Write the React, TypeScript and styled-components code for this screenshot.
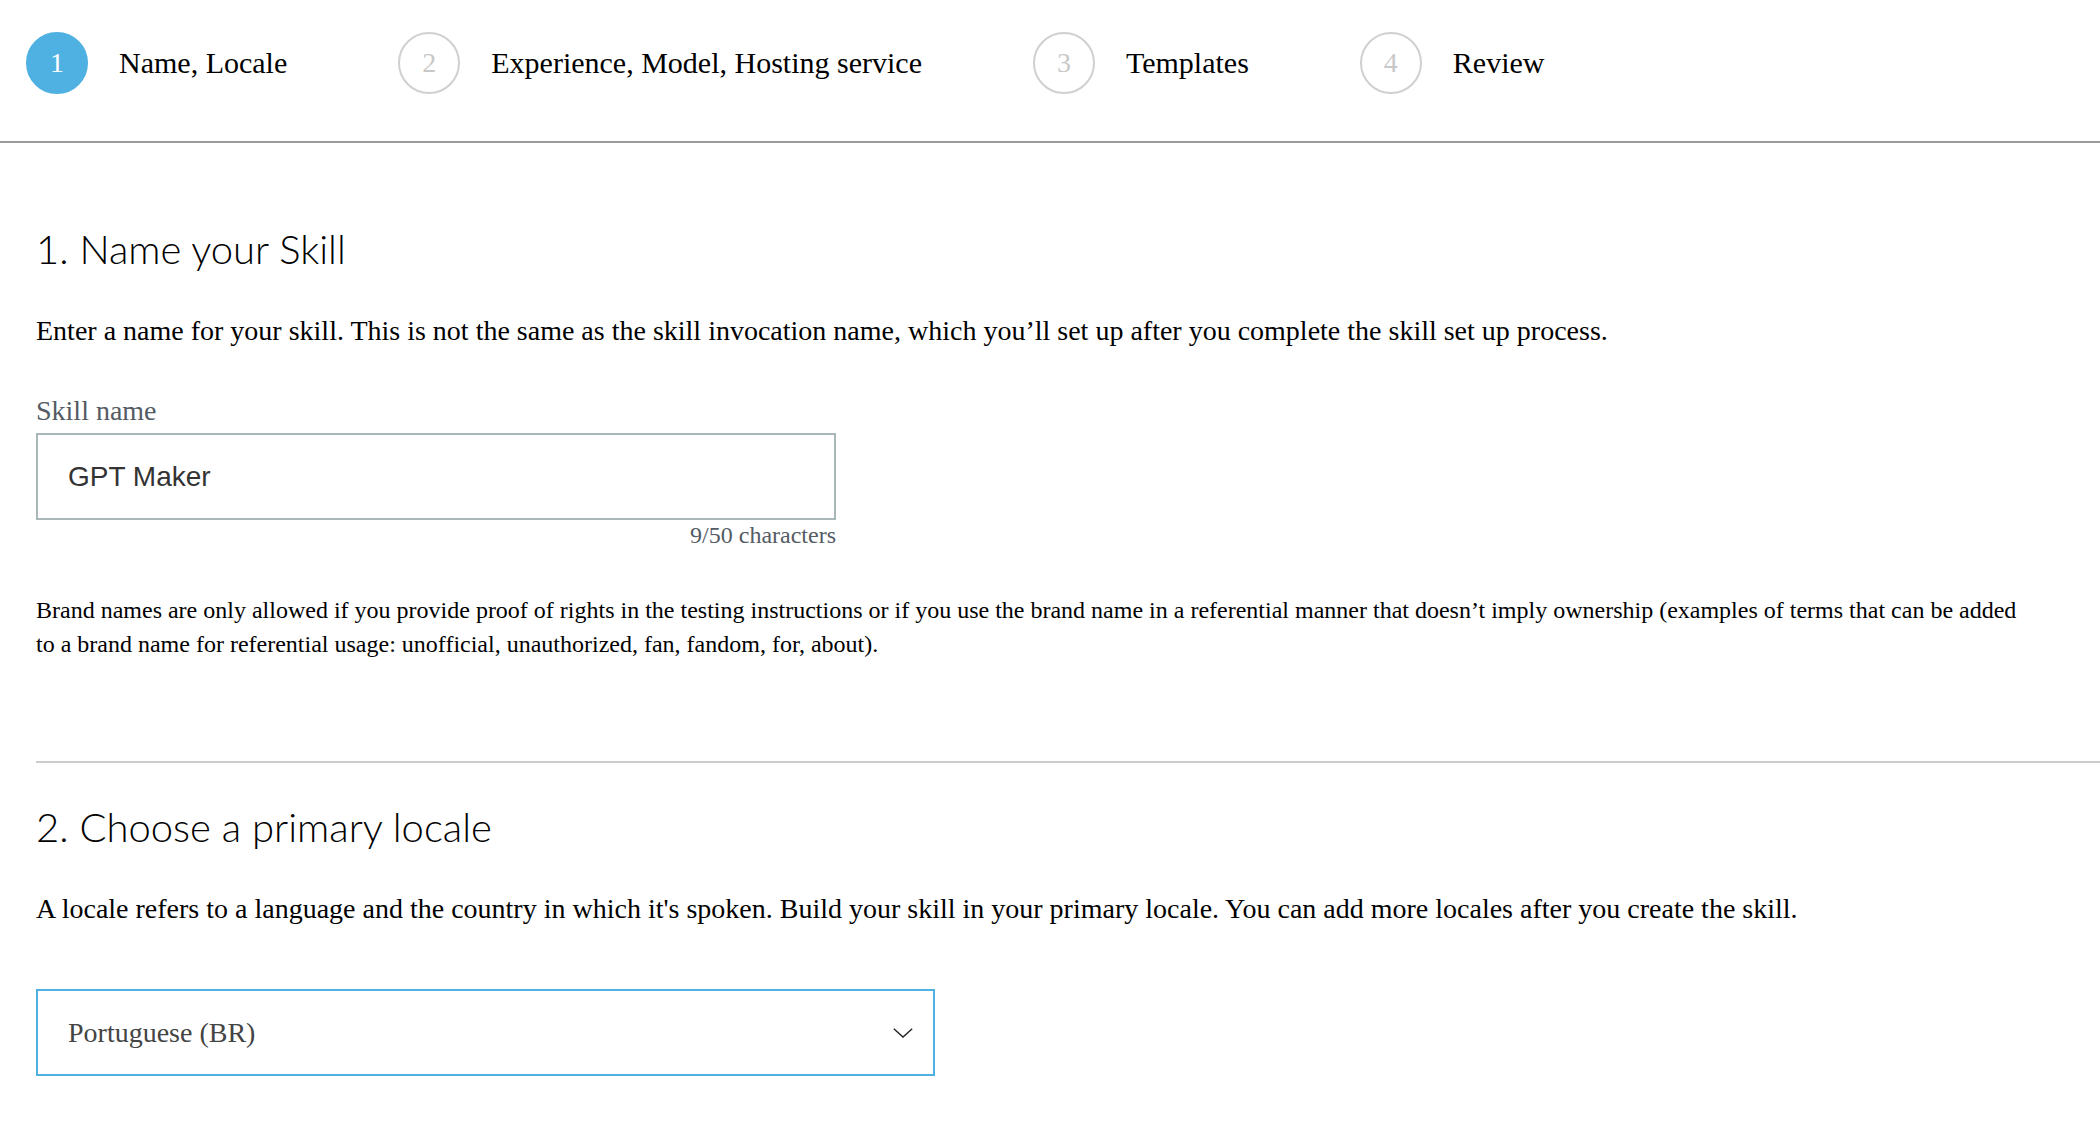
import styled, { createGlobalStyle } from "styled-components";

const GlobalStyle = createGlobalStyle`
  body {
    margin: 0;
    background: #ffffff;
    font-family: "Liberation Serif", "Times New Roman", serif;
    color: #000000;
  }
`;

const Header = styled.header`
  display: flex;
  align-items: center;
  gap: 111px;
  padding: 32px 0 47px 26px;
  border-bottom: 2px solid #9b9b9b;
`;

const Step = styled.div`
  display: flex;
  align-items: center;
  gap: 31px;
`;

const StepCircle = styled.div<{ $active?: boolean }>`
  box-sizing: border-box;
  width: 62px;
  height: 62px;
  border-radius: 50%;
  display: flex;
  align-items: center;
  justify-content: center;
  font-size: 28px;
  background: ${(p) => (p.$active ? "#4fb0e2" : "#ffffff")};
  border: 2px solid ${(p) => (p.$active ? "#4fb0e2" : "#d0d0d0")};
  color: ${(p) => (p.$active ? "#ffffff" : "#c8c8c8")};
`;

const StepLabel = styled.span`
  font-size: 30px;
  color: #000000;
`;

const Main = styled.main`
  padding: 0 0 60px 36px;
`;

const Section = styled.section<{ $top: number }>`
  display: flex;
  flex-direction: column;
  align-items: flex-start;
  padding: ${(p) => p.$top}px 72px 0 0;
`;

const Heading = styled.h2`
  margin: 0 0 40px;
  font-family: Lato, "Open Sans", sans-serif;
  font-weight: 300;
  font-size: 40px;
  line-height: 48px;
  color: #000000;
`;

const Lead = styled.p`
  margin: 0;
  font-size: 28px;
  line-height: 36px;
`;

const Field = styled.div`
  width: 800px;
  margin-top: 45px;
`;

const Label = styled.div`
  margin-bottom: 5px;
  font-size: 28px;
  line-height: 34px;
  color: #545b64;
`;

const TextInput = styled.div`
  box-sizing: border-box;
  height: 87px;
  border: 2px solid #aab7b8;
  display: flex;
  align-items: center;
  padding-left: 30px;
  font-family: "Liberation Sans", Arial, sans-serif;
  font-size: 28px;
  color: #333333;
`;

const Counter = styled.div`
  text-align: right;
  font-size: 24px;
  line-height: 30px;
  color: #545b64;
`;

const Note = styled.p`
  margin: 43px 0 0;
  font-size: 24px;
  line-height: 34px;
`;

const Divider = styled.hr`
  margin: 100px 0 0;
  border: none;
  border-top: 2px solid #cccccc;
`;

const Select = styled.div`
  box-sizing: border-box;
  width: 899px;
  height: 87px;
  margin-top: 62px;
  border: 2px solid #4fb0e2;
  display: flex;
  align-items: center;
  justify-content: space-between;
  padding: 0 20px 0 30px;
  font-size: 28px;
  color: #444444;
`;

const steps = [
  { n: 1, label: "Name, Locale", active: true },
  { n: 2, label: "Experience, Model, Hosting service" },
  { n: 3, label: "Templates" },
  { n: 4, label: "Review" },
];

function Chevron() {
  return (
    <svg width="20" height="10" viewBox="0 0 20 10" fill="none">
      <path d="M0.8 0.8 L10 9 L19.2 0.8" stroke="#222" strokeWidth="1.4" />
    </svg>
  );
}

export default function App() {
  return (
    <>
      <GlobalStyle />
      <Header>
        {steps.map((s) => (
          <Step key={s.n}>
            <StepCircle $active={s.active}>{s.n}</StepCircle>
            <StepLabel>{s.label}</StepLabel>
          </Step>
        ))}
      </Header>
      <Main>
        <Section $top={82}>
          <Heading>1. Name your Skill</Heading>
          <Lead>
            Enter a name for your skill. This is not the same as the skill invocation name, which you’ll set up after you complete the skill set up process.
          </Lead>
          <Field>
            <Label>Skill name</Label>
            <TextInput>GPT Maker</TextInput>
            <Counter>9/50 characters</Counter>
          </Field>
          <Note>
            Brand names are only allowed if you provide proof of rights in the testing instructions or if you use the brand name in a referential manner that doesn’t imply ownership (examples of terms that can be added to a brand name for referential usage: unofficial, unauthorized, fan, fandom, for, about).
          </Note>
        </Section>
        <Divider />
        <Section $top={40}>
          <Heading>2. Choose a primary locale</Heading>
          <Lead>
            A locale refers to a language and the country in which it's spoken. Build your skill in your primary locale. You can add more locales after you create the skill.
          </Lead>
          <Select>
            <span>Portuguese (BR)</span>
            <Chevron />
          </Select>
        </Section>
      </Main>
    </>
  );
}
